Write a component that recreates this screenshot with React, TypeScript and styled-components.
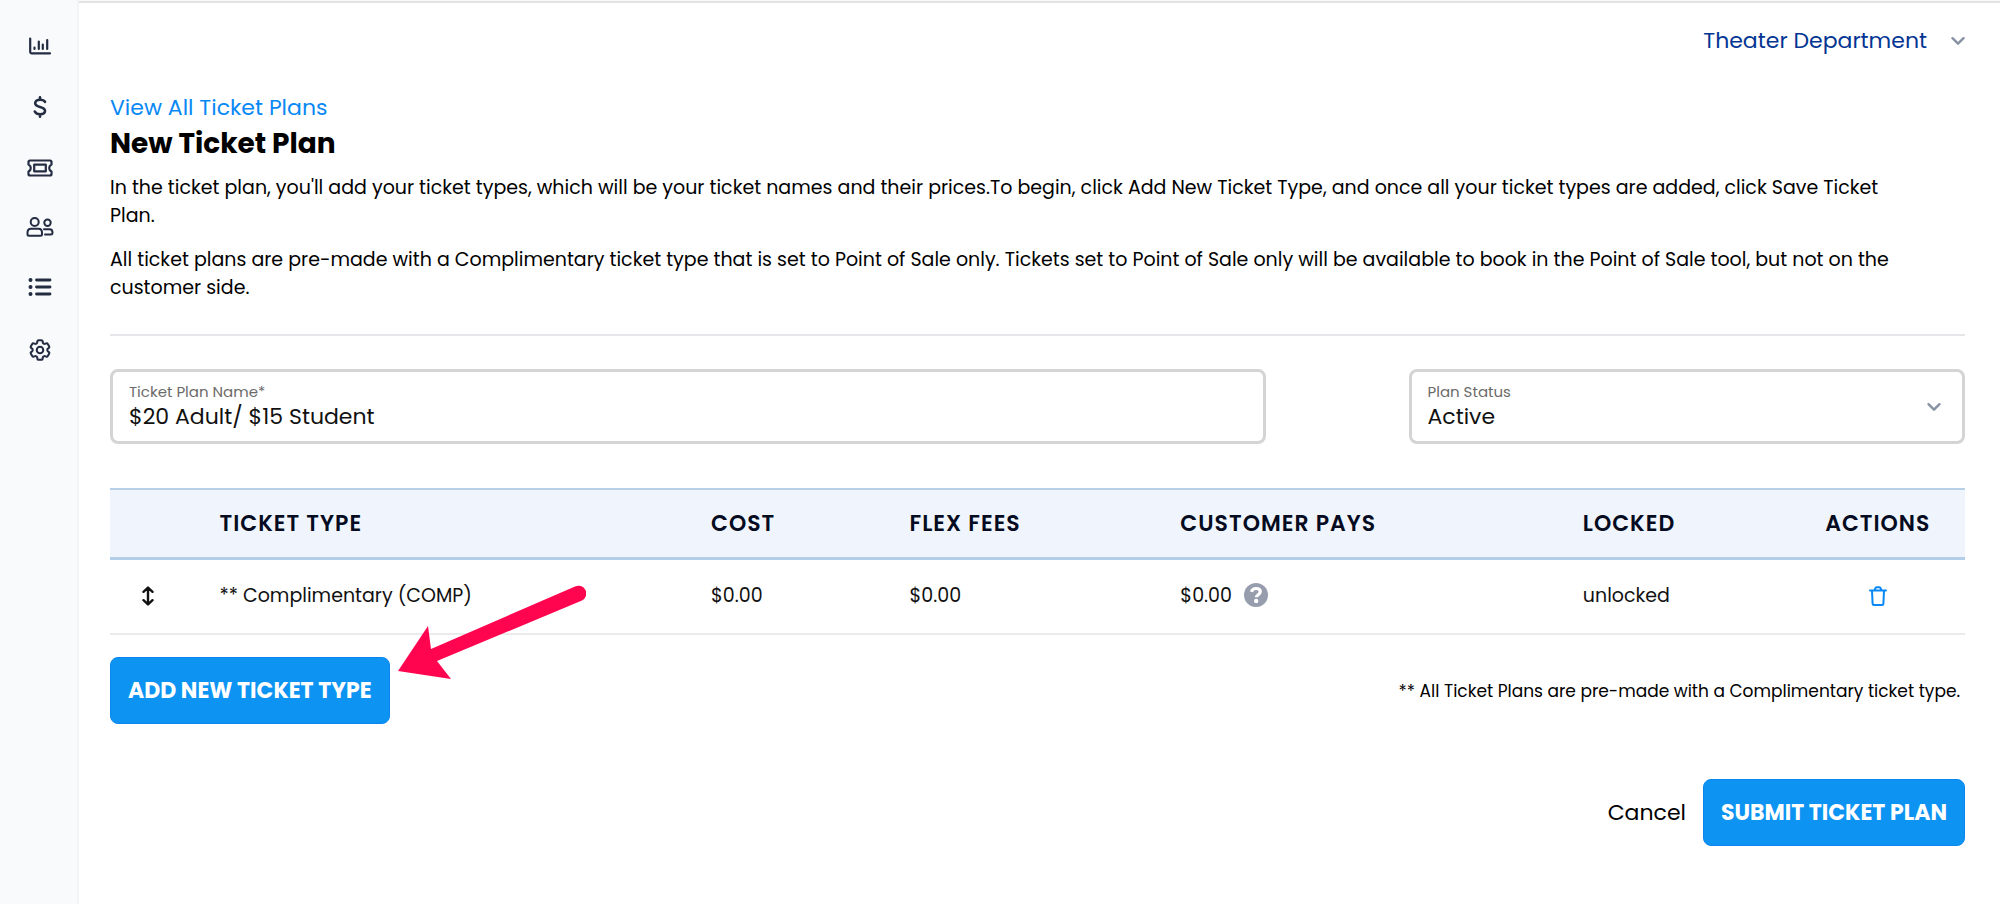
import React, { useState } from 'react';
import styled, { createGlobalStyle } from 'styled-components';
import { HiOutlineCog6Tooth } from 'react-icons/hi2';

const GlobalStyle = createGlobalStyle`
  *, *::before, *::after { box-sizing: border-box; }
  body {
    margin: 0;
    background: #fff;
    color: #000;
    font-family: Poppins, Inter, 'Liberation Sans', sans-serif;
    font-size: 19px;
    line-height: 28px;
  }
  button, input, select { font: inherit; color: inherit; }
  a { text-decoration: none; color: inherit; }
`;

const Shell = styled.div`
  display: flex;
  min-height: 100vh;
`;

const Sidebar = styled.nav`
  flex: none;
  width: 79px;
  background: #f8fafc;
  border-right: 2px solid #f3f4f6;
  padding-top: 37px;
`;

const NavList = styled.ul`
  list-style: none;
  margin: 0;
  padding: 0 0 0 3px;
  display: flex;
  flex-direction: column;
  gap: 40px;
`;

const NavLink = styled.a`
  display: flex;
  justify-content: center;
  align-items: center;
  color: #242c42;
`;

const Main = styled.main`
  flex: 1;
  min-width: 0;
  border-top: 1px solid #f8f8f8;
  box-shadow: inset 0 2px #e1e2e4;
  padding: 20px 35px 58px 31px;
`;

const AccountBar = styled.header`
  display: flex;
  justify-content: flex-end;
  margin-bottom: 31px;
`;

const AccountButton = styled.button`
  display: flex;
  align-items: center;
  gap: 24px;
  border: 0;
  background: none;
  padding: 0;
  font-size: 22px;
  line-height: 40px;
  color: #033593;
  cursor: pointer;
`;

const BackLink = styled.a`
  display: block;
  width: fit-content;
  font-size: 22px;
  line-height: 32px;
  color: #0788f4;
`;

const Title = styled.h1`
  margin: 0 0 10px;
  font-size: 28px;
  line-height: 40px;
  font-weight: 700;
`;

const Intro = styled.p`
  margin: 0 0 16px;
  padding-right: 56px;
`;

const Divider = styled.hr`
  margin: 32px 0 33px;
  border: 0;
  border-top: 2px solid #e5e7eb;
`;

const Fields = styled.div`
  display: grid;
  grid-template-columns: 62.3% 30%;
  justify-content: space-between;
  margin-bottom: 44px;
`;

const Field = styled.div`
  position: relative;
  display: flex;
  flex-direction: column;
  height: 75px;
  padding: 10px 16px;
  border: 3px solid #d4d4d4;
  border-radius: 8px;
`;

const FieldLabel = styled.label`
  font-size: 15px;
  line-height: 20px;
  color: #6b6b6b;
`;

const TextInput = styled.input`
  width: 100%;
  border: 0;
  padding: 0;
  outline: none;
  background: none;
  font-size: 22px;
  line-height: 30px;
  color: #111;
`;

const Select = styled.select`
  width: 100%;
  border: 0;
  padding: 0;
  outline: none;
  background: none;
  appearance: none;
  font-size: 22px;
  line-height: 30px;
  color: #111;
`;

const SelectArrow = styled.span`
  position: absolute;
  right: 20px;
  top: 0;
  bottom: 0;
  display: flex;
  align-items: center;
  pointer-events: none;
`;

const Table = styled.table`
  width: 100%;
  table-layout: fixed;
  border-collapse: collapse;
  margin-bottom: 22px;
`;

const HeadRow = styled.tr`
  background: #f0f5fd;
  border-top: 2px solid #b7d0e8;
  border-bottom: 3px solid #b4cee9;
`;

const Th = styled.th<{ $width: string; $center?: boolean }>`
  width: ${(p) => p.$width};
  height: 69px;
  padding: 2px 0 0;
  text-align: ${(p) => (p.$center ? 'center' : 'left')};
  font-size: 22px;
  font-weight: 600;
  letter-spacing: 1px;
  color: #050b20;
`;

const BodyRow = styled.tr`
  border-bottom: 2px solid #ebebeb;
`;

const Td = styled.td<{ $center?: boolean }>`
  height: 76px;
  padding: 0;
  text-align: ${(p) => (p.$center ? 'center' : 'left')};
  color: #111;
`;

const IconButton = styled.button`
  display: inline-flex;
  vertical-align: middle;
  padding: 0 0 2px;
  border: 0;
  background: none;
  cursor: pointer;
`;

const DragHandle = styled(IconButton)`
  margin-left: 31px;
  color: #111;
  cursor: grab;
`;

const Amount = styled.span`
  display: flex;
  align-items: center;
  gap: 12px;
`;

const TableFooter = styled.div`
  display: flex;
  justify-content: space-between;
  align-items: center;
  margin-bottom: 55px;
`;

const AddWrap = styled.div`
  position: relative;
  display: flex;
`;

const Pointer = styled.svg`
  position: absolute;
  left: 100%;
  bottom: 42px;
  margin-left: 4px;
  pointer-events: none;
`;

const PrimaryButton = styled.button`
  height: 67px;
  padding: 0 17px;
  border: 1px solid #0a87ee;
  border-radius: 8px;
  background: #0d94f3;
  color: #fff;
  font-size: 22px;
  font-weight: 700;
  cursor: pointer;
`;

const Note = styled.small`
  padding-right: 5px;
  font-size: 17px;
`;

const FormActions = styled.div`
  display: flex;
  justify-content: flex-end;
  align-items: center;
  gap: 17px;
`;

const CancelLink = styled.a`
  font-size: 22px;
`;

const Icon = ({ w, h, box, sw = 2, children }: { w: number; h: number; box: string; sw?: number; children: React.ReactNode }) => (
  <svg width={w} height={h} viewBox={box} fill="none" stroke="currentColor" strokeWidth={sw} strokeLinecap="round" strokeLinejoin="round" aria-hidden="true">
    {children}
  </svg>
);

const Chevron = ({ width }: { width: number }) => (
  <svg width={width} height={10} viewBox="0 0 14 10" fill="none" stroke="#8792a3" strokeWidth="2.4" strokeLinecap="round" strokeLinejoin="round" aria-hidden="true">
    <path d="M1.500 2.200L7 7.700l5.500-5.500" />
  </svg>
);

const navItems = [
  {
    label: 'Reports',
    icon: (
      <Icon w={22} h={18} box="0 0 22 18" sw={2.2}>
        <path d="M1.200 1.500V15q0 1.300 1.300 1.300H21M5.500 10.500V12M9.800 4.500V12M13.800 7.500V12M18.200 3V12" />
      </Icon>
    ),
  },
  {
    label: 'Finance',
    icon: (
      <Icon w={14} h={24} box="0 0 14 24" sw={2.6}>
        <path d="M7 2.200v2.600M7 19.200v2.600M12 6.800C11 5.300 9.300 4.800 7.200 4.800 4 4.800 2.300 6.200 2.200 8.300 2.200 10.600 4.300 11.300 7 12s5 1.300 5 3.800c0 2.200-2 3.500-4.900 3.500-2.400 0-4.400-.9-5.300-2.800" />
      </Icon>
    ),
  },
  {
    label: 'Tickets',
    icon: (
      <Icon w={26} h={18} box="1 0 26 18" sw={2.2}>
        <path d="M4 1.500h20q1.500 0 1.500 1.500v2.400q-2.300 1.200-2.300 3.600t2.300 3.600V15q0 1.500-1.500 1.500H4q-1.500 0-1.500-1.500v-2.400q2.300-1.200 2.300-3.600t-2.300-3.600V3q0-1.500 1.500-1.500zM8.200 5.700h11.600v6.600H8.200z" />
      </Icon>
    ),
  },
  {
    label: 'People',
    icon: (
      <Icon w={28} h={20} box="0 0 28 20">
        <circle cx="8.700" cy="5" r="4" />
        <circle cx="21.500" cy="5.800" r="3.200" />
        <path d="M5 11.800h7.500q3.500 0 3.500 4v1.500q0 1.500-1.500 1.500H3q-1.500 0-1.500-1.500v-1.500q0-4 3.500-4zM18 12.200h5.500q3 0 3 3.300 0 2-1.500 2h-6" />
      </Icon>
    ),
  },
  {
    label: 'Lists',
    icon: (
      <Icon w={24} h={20} box="0 0 24 20" sw={2.8}>
        <path d="M8.500 3H22M8.500 10H22M8.500 17H22" />
        <path strokeWidth="4" d="M2.500 3h.01M2.500 10h.01M2.500 17h.01" />
      </Icon>
    ),
  },
  { label: 'Settings', icon: <HiOutlineCog6Tooth size={26} strokeWidth={1.9} aria-hidden="true" /> },
];

export default function App() {
  const [name, setName] = useState('$20 Adult/ $15 Student');
  const [status, setStatus] = useState('Active');

  return (
    <Shell>
      <GlobalStyle />
      <Sidebar aria-label="Main">
        <NavList>
          {navItems.map((item) => (
            <li key={item.label}>
              <NavLink href="#" aria-label={item.label}>{item.icon}</NavLink>
            </li>
          ))}
        </NavList>
      </Sidebar>
      <Main>
        <AccountBar>
          <AccountButton type="button">
            Theater Department
            <Chevron width={14} />
          </AccountButton>
        </AccountBar>
        <BackLink href="#">View All Ticket Plans</BackLink>
        <Title>New Ticket Plan</Title>
        <Intro>
          In the ticket plan, you'll add your ticket types, which will be your ticket names and their prices.To begin,
          click Add New Ticket Type, and once all your ticket types are added, click Save Ticket Plan.
        </Intro>
        <Intro>
          All ticket plans are pre-made with a Complimentary ticket type that is set to Point of Sale only. Tickets set
          to Point of Sale only will be available to book in the Point of Sale tool, but not on the customer side.
        </Intro>
        <Divider />
        <Fields>
          <Field>
            <FieldLabel htmlFor="plan-name">Ticket Plan Name*</FieldLabel>
            <TextInput id="plan-name" value={name} onChange={(e) => setName(e.target.value)} />
          </Field>
          <Field>
            <FieldLabel htmlFor="plan-status">Plan Status</FieldLabel>
            <Select id="plan-status" value={status} onChange={(e) => setStatus(e.target.value)}>
              <option>Active</option>
            </Select>
            <SelectArrow><Chevron width={16} /></SelectArrow>
          </Field>
        </Fields>
        <Table>
          <thead>
            <HeadRow>
              <Th $width="5.9%" aria-label="Reorder" />
              <Th $width="26.5%">TICKET TYPE</Th>
              <Th $width="10.7%">COST</Th>
              <Th $width="14.6%">FLEX FEES</Th>
              <Th $width="21.7%">CUSTOMER PAYS</Th>
              <Th $width="11.2%">LOCKED</Th>
              <Th $width="9.4%" $center>ACTIONS</Th>
            </HeadRow>
          </thead>
          <tbody>
            <BodyRow>
              <Td>
                <DragHandle type="button" aria-label="Move row">
                  <Icon w={14} h={20} box="0 0 14 20" sw={2.4}>
                    <path d="M7 2v16M2.500 5.800L7 1.500l4.500 4.300M2.500 14.200L7 18.500l4.500-4.300" />
                  </Icon>
                </DragHandle>
              </Td>
              <Td>** Complimentary (COMP)</Td>
              <Td>$0.00</Td>
              <Td>$0.00</Td>
              <Td>
                <Amount>
                  $0.00
                  <IconButton type="button" aria-label="About this amount">
                    <svg width="24" height="24" viewBox="0 0 24 24" fill="none" aria-hidden="true">
                      <circle cx="12" cy="12" r="12" fill="#979dad" />
                      <path d="M7.500 8.800C8 6.600 9.700 5.500 12.100 5.500c2.500 0 4.200 1.300 4.200 3.300 0 2.800-4 3-4 5.500" stroke="#fff" strokeWidth="3.200" />
                      <circle cx="12.200" cy="18" r="2.200" fill="#fff" />
                    </svg>
                  </IconButton>
                </Amount>
              </Td>
              <Td>unlocked</Td>
              <Td $center>
                <IconButton type="button" aria-label="Delete">
                  <svg width="18" height="20" viewBox="0 0 18 20" fill="none" stroke="#0788f4" strokeWidth="2" strokeLinecap="round" strokeLinejoin="round" aria-hidden="true">
                    <path d="M1 4.500h16M3 4.500l.6 13.200q.1 1.300 1.300 1.300h8.200q1.200 0 1.300-1.300l.6-13.200M5.500 4.500l.8-2.200q.4-1.100 1.300-1.100h2.800q.9 0 1.300 1.100l.8 2.200" />
                  </svg>
                </IconButton>
              </Td>
            </BodyRow>
          </tbody>
        </Table>
        <TableFooter>
          <AddWrap>
            <PrimaryButton type="button">ADD NEW TICKET TYPE</PrimaryButton>
            <Pointer width="192" height="98" viewBox="394 584 192 98" aria-hidden="true">
              <path fill="#ff0550" d="M398 671L428 626l3 23 144-62.500a7.500 7.500 0 0 1 7 14L437 661l14 18z" />
            </Pointer>
          </AddWrap>
          <Note>** All Ticket Plans are pre-made with a Complimentary ticket type.</Note>
        </TableFooter>
        <FormActions>
          <CancelLink href="#">Cancel</CancelLink>
          <PrimaryButton type="submit">SUBMIT TICKET PLAN</PrimaryButton>
        </FormActions>
      </Main>
    </Shell>
  );
}
